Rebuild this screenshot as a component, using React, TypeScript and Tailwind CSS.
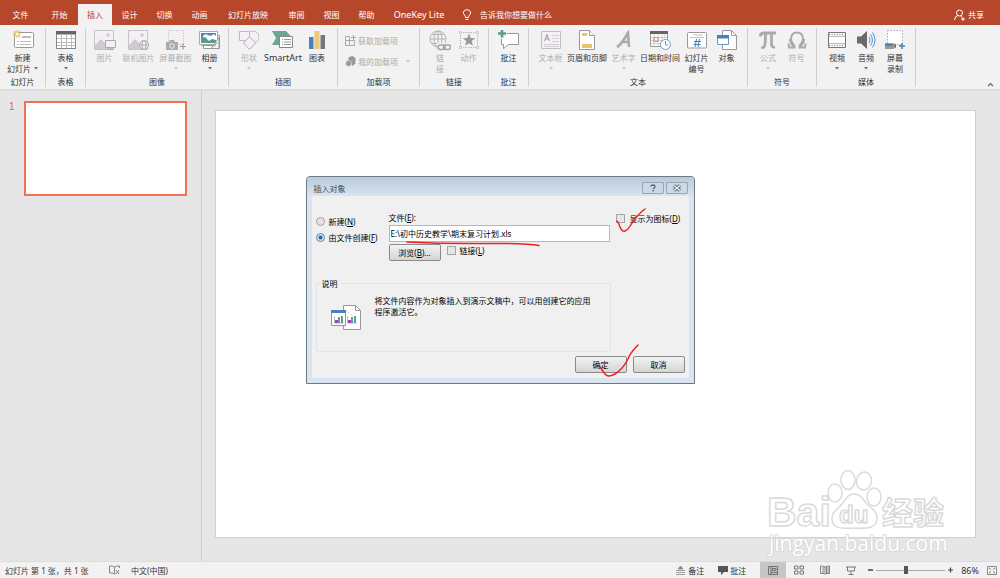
import React, { useState } from "react";
import clsx from "clsx";

const font =
	"font-['Noto_Sans','Noto_Sans_CJK_SC',sans-serif] text-[8px] leading-[11px]";

function Svg({
	w = 20,
	h = 20,
	children,
}: {
	w?: number;
	h?: number;
	children: React.ReactNode;
}) {
	return (
		<svg
			width={w}
			height={h}
			viewBox={`0 0 ${w} ${h}`}
			fill="none"
			className="shrink-0"
			aria-hidden="true"
		>
			{children}
		</svg>
	);
}

const icons = {
	newSlide: (
		<Svg w={22}>
			<rect x="2.500" y="2.500" width="19" height="15" rx="1" fill="#fff" stroke="#999" />
			<path d="M10 7h9" stroke="#bbb" strokeWidth="2" />
			<path d="M5 11.500h2M5 14.500h2M8 11.500h11M8 14.500h11" stroke="#bbb" />
			<path d="M5 0v8M1 4h8M2 1l6 6M8 1L2 7" stroke="#e8b860" strokeWidth="1.200" />
			<circle cx="5" cy="4" r="1.500" fill="#fff" />
		</Svg>
	),
	table: (
		<Svg>
			<rect x=".5" y="1.500" width="19" height="17" fill="#fff" stroke="#888" />
			<path d="M0 1h20v3.500H0z" fill="#666" />
			<path d="M5.500 4v14M10.500 4v14M15.500 4v14M1 8.500h18M1 12.500h18M1 15.500h18" stroke="#bbb" />
		</Svg>
	),
	picture: (
		<Svg w={22}>
			<path d="M.5.500h19v19H.5z" fill="#f6f0f6" stroke="#c4c4c4" />
			<path d="M1 15l6-6 5 5 3-3 4 4v4H1z" fill="#ccc" />
			<circle cx="14" cy="5" r="1.800" fill="#ccc" />
			<path d="M11.500 10.500h10v7h-10zM16.500 18v1.500M13 19.500h7" fill="#f6f0f6" stroke="#aaa" />
		</Svg>
	),
	onlinePicture: (
		<Svg w={22}>
			<path d="M.5.500h19v19H.5z" fill="#f6f0f6" stroke="#c4c4c4" />
			<path d="M1 15l6-6 6 6v4H1z" fill="#ccc" />
			<circle cx="14" cy="5" r="1.800" fill="#ccc" />
			<circle cx="16" cy="15" r="4.500" fill="#f6f0f6" stroke="#aaa" />
			<ellipse cx="16" cy="15" rx="2" ry="4.500" stroke="#aaa" />
			<path d="M11.500 15h9" stroke="#aaa" />
		</Svg>
	),
	screenshot: (
		<Svg w={20}>
			<path d="M2.500.500h15v14h-15z" fill="#f6f0f6" stroke="#bbb" strokeDasharray="1 1.500" />
			<path d="M0 12h3l1-2h4l1 2h3v8H0z" fill="#aaa" />
			<circle cx="6" cy="16" r="2.300" fill="#aaa" stroke="#eee" />
			<path d="M17 13.500v6M14 16.500h6" stroke="#999" strokeWidth="1.200" />
		</Svg>
	),
	album: (
		<Svg w={22}>
			<path d="M4.500 5.500h16v13h-16z" fill="#fff" stroke="#999" />
			<path d="M2.500 3.500h16v12h-16z" fill="#fff" stroke="#999" />
			<path d="M.5 1.500h18v13H.5z" fill="#fff" stroke="#aaa" />
			<path d="M2 3h15v6H2z" fill="#4a8ac0" />
			<path d="M4 6q2-3 5-1t6-1l2 2v3H4z" fill="#fff" />
			<path d="M2 8l4-1 4 4 3-2 4 1v3H2z" fill="#5c9c80" />
			<path d="M12 18.500l8-11v11z" fill="#f4f4f4" stroke="#999" />
			<path d="M15 16.500l3-4" stroke="#888" />
		</Svg>
	),
	shapes: (
		<Svg>
			<circle cx="14" cy="7" r="6" fill="#f6f0f6" stroke="#bbb" />
			<path d="M.5 1.500h10v9H.5z" fill="#f6f0f6" stroke="#bbb" />
			<path d="M10.500 6.500l6 6.500-6 6.500-6-6.500z" fill="#f6f0f6" stroke="#b0b0b0" />
		</Svg>
	),
	smartArt: (
		<Svg w={22}>
			<path d="M0 1h14l5 5.500H8V15H0l4-7z" fill="#6ba593" />
			<path d="M7.500 6.500h13v11h-13z" fill="#fff" stroke="#888" />
			<path d="M10 9.500h1M12 9.500h7M10 12h1M12 12h7M10 14.500h1M12 14.500h7" stroke="#999" />
		</Svg>
	),
	chart: (
		<Svg w={18}>
			<path d="M1 7h4.500v12H1z" fill="#4a80bd" />
			<path d="M6.500 1h5v18h-5z" fill="#edc77b" />
			<path d="M12.500 5H17v14h-4.500z" fill="#777" />
		</Svg>
	),
	hyperlink: (
		<Svg w={22} h={21}>
			<g stroke="#b4b4b4">
				<circle cx="9" cy="9" r="8" />
				<ellipse cx="9" cy="9" rx="4" ry="8" />
				<path d="M1 9h16M2.500 4.500h13M2.500 13.500h13M9 1v16" />
			</g>
			<path d="M8 13h14v8H8z" fill="#f2f2f2" />
			<rect x="9" y="15" width="7" height="4.500" rx="2.200" stroke="#a4a4a4" strokeWidth="1.500" />
			<rect x="14.500" y="15" width="7" height="4.500" rx="2.200" stroke="#a4a4a4" strokeWidth="1.500" />
		</Svg>
	),
	action: (
		<Svg>
			<path d="M1.500 2.500h17v15h-17z" stroke="#bbb" strokeDasharray="1.500 1" />
			<path d="M.5 1.500h2v2h-2zM17.500 1.500h2v2h-2zM.5 16.500h2v2h-2zM17.500 16.500h2v2h-2z" fill="#f2f2f2" stroke="#bbb" strokeWidth=".7" />
			<path d="M10 3.500l1.700 4.500 4.600.2-3.600 2.900 1.200 4.600L10 13.200l-3.900 2.500 1.200-4.600L3.700 8.200 8.300 8z" fill="#999" />
		</Svg>
	),
	comment: (
		<Svg w={22}>
			<path d="M3.500 3.500h17v11h-10l-5 4v-4h-2z" fill="#fff" stroke="#999" />
			<path d="M4 0v9M0 3.500h9" stroke="#f2f2f2" strokeWidth="5" />
			<path d="M4 0v7.500M0 3.500h8" stroke="#5f9f87" strokeWidth="2.600" />
		</Svg>
	),
	textBox: (
		<Svg>
			<path d="M.5 1.500h19v17H.5z" fill="#f6f0f6" stroke="#c0c0c0" />
			<path d="M3.500 11L6 4.500 8.500 11M4.500 9h3" stroke="#999" />
			<path d="M11 5.500h7M11 8.500h7M11 11.500h7M3 14.500h15M3 16.500h15" stroke="#d0d0d0" />
		</Svg>
	),
	header: (
		<Svg w={16}>
			<path d="M.5.500h10l5 5v14H.5z" fill="#fff" stroke="#999" />
			<path d="M10.500.500v5h5" fill="#fff" stroke="#999" />
			<path d="M3 3h5v3H3zM3 14h10v4H3z" fill="#e9c46f" />
		</Svg>
	),
	wordArt: (
		<Svg w={16}>
			<path d="M1 17Q5 15 12 3l1 14M6 12h7" stroke="#aaa" strokeWidth="2.600" />
		</Svg>
	),
	dateTime: (
		<Svg w={22}>
			<path d="M1.500 1.500h17v15h-17z" fill="#fff" stroke="#999" />
			<path d="M1 1h18v3H1z" fill="#666" />
			<path d="M5 4v12M9 4v12M13 4v12M16 4v12M2 7.500h16M2 10.500h16M2 13.500h16" stroke="#c4c4c4" strokeWidth=".8" />
			<path d="M5 7.500h4v4H5z" stroke="#e8935a" strokeWidth="1.200" />
			<circle cx="16.500" cy="14.500" r="5" fill="#fff" stroke="#6b9fd0" />
			<path d="M16.500 11v4h3" stroke="#6b9fd0" />
		</Svg>
	),
	slideNumber: (
		<Svg>
			<rect x=".5" y="2.500" width="19" height="15.500" rx="1" fill="#fff" stroke="#999" />
			<path d="M6 5h10M3 7.500h14" stroke="#c4c4c4" />
			<path d="M9.500 9l-1.500 8M12.500 9L11 17M7 11.500h7M6.500 14.500h7" stroke="#4a80bd" />
		</Svg>
	),
	object: (
		<Svg>
			<path d="M5.500.500h9l5 5v14h-14z" fill="#fff" stroke="#999" />
			<path d="M14.500.500v5h5" stroke="#999" />
			<path d="M.5 5.500h11v9H.5z" fill="#fff" stroke="#6a98cc" />
			<path d="M0 5h12v3.500H0z" fill="#4a80bd" />
		</Svg>
	),
	equation: (
		<Svg w={18}>
			<path d="M1 6.500Q1.500 3 5 3h12" stroke="#aaa" strokeWidth="3" />
			<path d="M6.500 4q0 10-1 12-1 2.500-3 1M12.500 4v10q0 4 3.500 3" stroke="#aaa" strokeWidth="2.800" />
		</Svg>
	),
	symbol: (
		<Svg>
			<path d="M6.500 16.500Q3 13 3 9" stroke="#aaa" strokeWidth="2" />
			<path d="M13.500 16.500Q17 13 17 9" stroke="#aaa" strokeWidth="2" />
			<path d="M1.500 13.500l.5 4h5.500q0-2.500-2-4.500Q4 11.500 4 8.500 4.500 2.500 10 2.500t6 6q0 3-1.500 4.500-2 2-2 4.500H18l.5-4" stroke="#aaa" strokeWidth="2" />
		</Svg>
	),
	video: (
		<Svg>
			<path d="M1.500 2.500h17v15h-17z" fill="#fff" stroke="#777" />
			<path d="M2 4.500h16M2 15.500h16" stroke="#888" strokeWidth="1.600" strokeDasharray="1 1.600" />
			<path d="M2 6.500h16M2 13.500h16" stroke="#aaa" strokeWidth=".8" />
		</Svg>
	),
	audio: (
		<Svg>
			<path d="M1 6.500h4L11 1v18l-6-5.500H1z" fill="#6a6a6a" />
			<path d="M13 7q2 3 0 6M14.500 4.500q4 5.500 0 11M16.500 2.500q5 7.500 0 15" stroke="#6b9fd0" strokeWidth="1.100" />
		</Svg>
	),
	record: (
		<Svg w={22}>
			<path d="M3.500.500h15v14h-15z" fill="#fff" stroke="#aaa" strokeDasharray="1.500 1.500" />
			<path d="M1 13h9v6H1z" fill="#999" />
			<path d="M1 14h7v2H1z" fill="#4a80bd" />
			<path d="M10 15l2-1.500v5L10 17z" fill="#777" />
			<path d="M18 13v6M15 16h6" stroke="#4a80bd" strokeWidth="1.500" />
		</Svg>
	),
};

type Item = {
	label: string;
	icon: React.ReactNode;
	width: string;
	arrow?: boolean;
	disabled?: boolean;
	labelWidth?: string;
};

const w28 = "w-7";
const w29 = "w-[29px]";
const w31 = "w-[31px]";
const w37 = "w-[37px]";
const w42 = "w-[42px]";

const groups: { name: string; width: string; items: Item[] }[] = [
	{
		name: "幻灯片",
		width: "w-[46px]",
		items: [{ label: "新建幻灯片", icon: icons.newSlide, width: w37 }],
	},
	{
		name: "表格",
		width: "w-10",
		items: [{ label: "表格", icon: icons.table, width: w31, arrow: true }],
	},
	{
		name: "图像",
		width: "w-[143px]",
		items: [
			{ label: "图片", icon: icons.picture, width: w31, disabled: true },
			{ label: "联机图片", icon: icons.onlinePicture, width: w37, disabled: true },
			{ label: "屏幕截图", icon: icons.screenshot, width: w37, disabled: true, arrow: true },
			{ label: "相册", icon: icons.album, width: w31, arrow: true },
		],
	},
	{
		name: "插图",
		width: "w-[109px]",
		items: [
			{ label: "形状", icon: icons.shapes, width: w31, disabled: true, arrow: true },
			{ label: "SmartArt", icon: icons.smartArt, width: w37 },
			{ label: "图表", icon: icons.chart, width: w31 },
		],
	},
	{ name: "加载项", width: "w-[82px]", items: [] },
	{
		name: "链接",
		width: "w-[69px]",
		items: [
			{ label: "链接", icon: icons.hyperlink, width: w29, disabled: true, labelWidth: "w-2" },
			{ label: "动作", icon: icons.action, width: w28, disabled: true },
		],
	},
	{
		name: "批注",
		width: "w-10",
		items: [{ label: "批注", icon: icons.comment, width: w31 }],
	},
	{
		name: "文本",
		width: "w-[219px]",
		items: [
			{ label: "文本框", icon: icons.textBox, width: w31, disabled: true, arrow: true },
			{ label: "页眉和页脚", icon: icons.header, width: w42 },
			{ label: "艺术字", icon: icons.wordArt, width: w31, disabled: true, arrow: true },
			{ label: "日期和时间", icon: icons.dateTime, width: w42 },
			{ label: "幻灯片编号", icon: icons.slideNumber, width: w31, labelWidth: "w-6" },
			{ label: "对象", icon: icons.object, width: w29 },
		],
	},
	{
		name: "符号",
		width: "w-[69px]",
		items: [
			{ label: "公式", icon: icons.equation, width: w29, disabled: true, arrow: true },
			{ label: "符号", icon: icons.symbol, width: w28, disabled: true },
		],
	},
	{
		name: "媒体",
		width: "w-[99px]",
		items: [
			{ label: "视频", icon: icons.video, width: w29, arrow: true },
			{ label: "音频", icon: icons.audio, width: w29, arrow: true },
			{ label: "屏幕录制", icon: icons.record, width: w29, labelWidth: "w-4" },
		],
	},
];

const tabs = [
	{ label: "文件", width: "w-[41px]" },
	{ label: "开始", width: "w-[37px]" },
	{ label: "插入", width: "w-[34px]" },
	{ label: "设计", width: "w-[35px]" },
	{ label: "切换", width: "w-[35px]" },
	{ label: "动画", width: "w-[35px]" },
	{ label: "幻灯片放映", width: "w-[62px]" },
	{ label: "审阅", width: "w-[35px]" },
	{ label: "视图", width: "w-[35px]" },
	{ label: "帮助", width: "w-[35px]" },
	{ label: "OneKey Lite", width: "w-[70px]" },
];

function Arrow() {
	return (
		<Svg w={4} h={3}>
			<path d="M0 0h4L2 2.500z" fill="currentColor" opacity=".7" />
		</Svg>
	);
}

function RibbonButton({ item }: { item: Item }) {
	return (
		<button
			disabled={item.disabled}
			className={clsx(
				"flex shrink-0 flex-col items-center gap-[2px] text-[#333] disabled:text-[#b0b0b0]",
				item.width,
			)}
		>
			<span className="flex h-5 items-center">{item.icon}</span>
			{item.label === "新建幻灯片" ? (
				<span>
					新建
					<span className="flex items-center gap-[3px]">
						幻灯片 <Arrow />
					</span>
				</span>
			) : (
				<span
					className={clsx(
						item.labelWidth ?? "whitespace-nowrap",
						item.label === "SmartArt" && "text-[9px]",
					)}
				>
					{item.label}
				</span>
			)}
			{item.arrow && (
				<span className="pt-[2px]">
					<Arrow />
				</span>
			)}
		</button>
	);
}

function AddIns() {
	return (
		<div className="flex flex-1 flex-col gap-[10px] self-start pt-[5px] pl-[7px] text-[#aaa]">
			<button disabled className="flex items-center gap-[2px]">
				<Svg w={11} h={11}>
					<path d="M.5 1.500h4v4h-4zM.5 5.500h4v5h-4zM4.500 5.500h5v5h-5zM8.500 0v5M6 2.500h5" stroke="#aaa" />
				</Svg>
				获取加载项
			</button>
			<button disabled className="flex items-center gap-[2px]">
				<Svg w={11} h={11}>
					<path d="M4 1l3.500-1L10.500 2v5.500L7.500 10 6 7 3 4z" fill="#999" />
					<circle cx="3.500" cy="7.500" r="3" fill="#999" stroke="#f2f2f2" strokeWidth=".6" />
				</Svg>
				我的加载项
				<span className="pl-[6px]">
					<Arrow />
				</span>
			</button>
		</div>
	);
}

function Header() {
	const [active, setActive] = useState("插入");

	return (
		<header>
			<div className="flex h-[25px] items-end bg-[#b7472a] text-white">
				<nav className="flex">
					{tabs.map((tab) => (
						<button
							key={tab.label}
							onClick={() => setActive(tab.label)}
							className={clsx(
								"h-[21px] whitespace-nowrap",
								tab.width,
								tab.label === "OneKey Lite" && "text-[9px]",
								active === tab.label && "bg-[#f2f2f2] text-[#b7472a]",
							)}
						>
							{tab.label}
						</button>
					))}
				</nav>
				<button className="flex h-[21px] items-center gap-2 pl-2">
					<Svg w={10} h={12}>
						<path d="M3.500 8.500Q3.500 7 2.500 6 1 4.500 1.500 3 2.200.700 5 .700T8.500 3q.5 1.500-1 3-1 1-1 2.500zM3.500 10.500h3" stroke="#fff" />
					</Svg>
					告诉我你想要做什么
				</button>
				<button className="mr-4 ml-auto flex h-[21px] items-center gap-[3px]">
					<Svg w={11} h={12}>
						<circle cx="5.500" cy="4" r="3" stroke="#fff" />
						<path d="M.5 11q.3-4 3.500-4.500M6.500 7L8 8M9 8v4M7 10h4" stroke="#fff" />
					</Svg>
					共享
				</button>
			</div>
			<div className="flex h-[66px] border-b-2 border-[#dbdbdb] bg-[#f2f2f2] pt-[3px]">
				{groups.map((group) => (
					<section
						key={group.name}
						className={clsx(
							"mb-[2px] flex shrink-0 flex-col border-r border-[#cfcfcf] pt-[2px]",
							group.width,
						)}
					>
						<div className="flex h-12 justify-center">
							{group.name === "加载项" ? (
								<AddIns />
							) : (
								group.items.map((item) => (
									<RibbonButton key={item.label} item={item} />
								))
							)}
						</div>
						<h2 className="text-center text-[#333]">{group.name}</h2>
					</section>
				))}
				<button aria-label="折叠功能区" className="mr-[6px] mb-[2px] ml-auto self-end">
					<Svg w={7} h={5}>
						<path d="M1 4l2.500-2.500L6 4" stroke="#666" strokeWidth="1.200" />
					</Svg>
				</button>
			</div>
		</header>
	);
}

const dialogButton =
	"h-[17px] w-[52px] rounded-[2px] border border-[#8a8a8a] bg-linear-to-b from-[#f3f3f3] to-[#d4d4d4] text-center leading-[14px] text-black";
const checkbox =
	"size-[9px] appearance-none border border-[#a4a4a4] bg-[#e4e6e8] checked:bg-[#4a80bd]";
const radio =
	"size-[9px] appearance-none rounded-full border border-[#a4a4a4] bg-[#e4e4e4] checked:border-[#6d8398] checked:bg-[radial-gradient(circle,#1f6fa8_30%,#dbe7ef_50%)]";
const captionButton =
	"flex h-3 w-[22px] items-center justify-center rounded-[1px] border border-[#97a5b5] bg-[#ccd8e5]";

function InsertObjectDialog() {
	const [source, setSource] = useState("file");

	return (
		<div
			role="dialog"
			aria-label="插入对象"
			className="absolute inset-x-0 top-[176px] mx-auto w-[389px] rounded-t-[4px] border border-[#6d7882] bg-[#d9e5f1] px-[5px] pb-[5px] text-black"
		>
			<div className="-mx-[5px] flex h-[19px] items-center gap-[2px] rounded-t-[4px] bg-linear-to-b from-[#b9c9da] to-[#d9e5f1] pt-[3px] pr-[6px] pl-[7px]">
				<h1 className="mr-auto text-[#3f4b58]">插入对象</h1>
				<button aria-label="帮助" className={captionButton}>
					<Svg w={6} h={8}>
						<path d="M1 2.500Q1 1 3 1t2 1.500T3 5M3 6v1.500" stroke="#566472" strokeWidth="1.300" />
					</Svg>
				</button>
				<button aria-label="关闭" className={captionButton}>
					<Svg w={10} h={8}>
						<path d="M2 1.500l6 5M8 1.500l-6 5" stroke="#566472" strokeWidth="3.200" />
						<path d="M2 1.500l6 5M8 1.500l-6 5" stroke="#eef2f6" strokeWidth="1.400" />
					</Svg>
				</button>
			</div>
			<div className="bg-[#f0f0f0] pt-4 pr-1 pb-[5px] pl-1">
				<div className="flex">
					<div className="flex w-[73px] flex-col gap-[5px] pt-1">
						<label className="flex items-center gap-1 whitespace-nowrap">
							<input
								type="radio"
								name="source"
								className={radio}
								checked={source === "new"}
								onChange={() => setSource("new")}
							/>
							<span>
								新建(<u>N</u>)
							</span>
						</label>
						<label className="flex items-center gap-1 whitespace-nowrap">
							<input
								type="radio"
								name="source"
								className={radio}
								checked={source === "file"}
								onChange={() => setSource("file")}
							/>
							<span>
								由文件创建(<u>F</u>)
							</span>
						</label>
					</div>
					<div className="flex w-[221px] flex-col">
						<label htmlFor="path">
							文件(<u>E</u>):
						</label>
						<input
							id="path"
							defaultValue="E:\初中历史教学\期末复习计划.xls"
							className="mt-[2px] h-[17px] border border-[#b4b8bc] bg-white px-px"
						/>
						<div className="mt-[2px] flex gap-[6px]">
							<button className={dialogButton}>
								浏览(<u>B</u>)...
							</button>
							<label className="flex h-3 items-center gap-1">
								<input type="checkbox" className={checkbox} />
								<span>
									链接(<u>L</u>)
								</span>
							</label>
						</div>
					</div>
					<label className="ml-[6px] flex h-3 items-center gap-[5px] whitespace-nowrap">
						<input type="checkbox" className={checkbox} />
						<span>
							显示为图标(<u>D</u>)
						</span>
					</label>
				</div>
				<fieldset className="mt-[17px] h-[74px] w-[295px] rounded-[2px] border border-[#dde4e8] px-[14px]">
					<legend className="-ml-[11px] px-[2px]">说明</legend>
					<div className="flex gap-[14px] pt-[6px]">
						<div className="pt-[10px]">
							<Svg w={30} h={25}>
								<path d="M12.500.500h12l5 5v19h-17z" fill="#fff" stroke="#999" />
								<path d="M24.500.500v5h5" stroke="#999" />
								<path d="M14 5l8 6" stroke="#bbb" strokeDasharray="1 1" />
								<path d="M.5 5.500h14v15H.5z" fill="#fff" stroke="#8898a8" />
								<path d="M0 5h15v3H0z" fill="#4a80bd" />
								<path d="M3.500 11v7h9M16.500 11v7h9" stroke="#999" strokeWidth=".7" />
								<path d="M4 15h3v3H4zM17 15h3v3h-3z" fill="#9a4aa8" />
								<path d="M7 12h2v6H7zM20 12h2v6h-2z" fill="#6a90c8" />
								<path d="M10 11h2v7h-2zM23 11h2v7h-2z" fill="#5aa088" />
							</Svg>
						</div>
						<p className="flex-1">
							将文件内容作为对象插入到演示文稿中，可以用创建它的应用
							<br />
							程序激活它。
						</p>
					</div>
				</fieldset>
				<div className="mt-1 flex justify-end gap-[6px]">
					<button className={dialogButton}>确定</button>
					<button className={dialogButton}>取消</button>
				</div>
			</div>
			<svg
				viewBox="0 0 389 208"
				className="pointer-events-none absolute -top-px -left-px h-[208px] w-[389px]"
				fill="none"
				stroke="#f02020"
				strokeWidth="1.500"
				strokeLinecap="round"
				strokeLinejoin="round"
				aria-hidden="true"
			>
				<path d="M101 66Q140 68 180 67.500T233 69.500" />
				<path d="M311 45q2 2 3 6 2 5 5 4 3-1 7-8 6-9 13-14" />
				<path d="M294 191q2 3 5 7 3 4 10 0 8-5 13-15 2-6 10-14" />
			</svg>
		</div>
	);
}

function Watermark() {
	return (
		<svg
			width="190"
			height="92"
			viewBox="0 0 190 92"
			className="pointer-events-none absolute right-12 bottom-[2px]"
			fill="#fff"
			stroke="#dadada"
			strokeLinejoin="round"
			aria-hidden="true"
		>
			<g strokeWidth="1.500">
				<ellipse cx="73" cy="26" rx="7" ry="9" />
				<ellipse cx="86" cy="13" rx="7" ry="9.500" />
				<ellipse cx="102" cy="14" rx="7.500" ry="9" transform="rotate(10 102 14)" />
				<ellipse cx="112" cy="30" rx="7" ry="9" />
				<path d="M92 27c7 0 9 6 13 10s11 8 10 15c-1 9-9 10-23 9-14 1-21 0-22-8-1-8 6-11 10-16s6-10 12-10z" />
			</g>
			<g strokeWidth="1.500" className="font-['Liberation_Sans',sans-serif] font-bold">
				<text x="5" y="59" fontSize="41">
					Bai
				</text>
				<text x="77" y="56" fontSize="24">
					du
				</text>
			</g>
			<text
				x="120"
				y="57"
				fontSize="31"
				strokeWidth="1.500"
				className="font-['Noto_Sans_CJK_SC',sans-serif] font-bold"
			>
				经验
			</text>
			<text
				x="7"
				y="84"
				fontSize="21"
				strokeWidth="2"
				paintOrder="stroke"
				className="font-['Open_Sans',sans-serif]"
			>
				jingyan.baidu.com
			</text>
		</svg>
	);
}

function StatusBar() {
	const [zoom, setZoom] = useState(43);

	return (
		<footer className="flex h-[17px] items-center border-t border-[#dcdcdc] bg-[#f2f2f2] pr-[3px] pl-[5px] text-[#333]">
			<span className="w-[104px]">幻灯片 第 1 张，共 1 张</span>
			<button aria-label="拼写检查" className="mr-[11px]">
				<Svg w={11} h={10}>
					<path d="M5.500 2Q3 .5.500 1v7q2.500-.5 5 1zM5.500 2Q8 .5 10.500 1v2M5.500 9l1-.5M7 5l3 4M10 5L7 9" stroke="#888" />
				</Svg>
			</button>
			<button>中文(中国)</button>
			<button className="mr-[14px] ml-auto flex items-center gap-[3px]">
				<Svg w={9} h={9}>
					<path d="M4.500 0L7 3H2zM0 4.500h9M0 6.500h9M0 8.500h9" fill="#888" stroke="#888" strokeWidth=".8" />
				</Svg>
				备注
			</button>
			<button className="mr-[14px] flex items-center gap-[2px]">
				<Svg w={10} h={9}>
					<path d="M0 0h10v6H6L3 9V6H0z" fill="#555" />
				</Svg>
				批注
			</button>
			<div className="flex h-full">
				<button aria-label="普通视图" className="flex w-[26px] items-center justify-center bg-[#c6c6c6]">
					<Svg w={10} h={9}>
						<path d="M.5.500h9v8h-9zM3 .500v8M4.500 2.500h3.500v2H4.500zM3 6.500h6" stroke="#666" strokeWidth=".9" />
					</Svg>
				</button>
				<button aria-label="幻灯片浏览" className="flex w-[26px] items-center justify-center">
					<Svg w={10} h={10}>
						<path d="M.5 1h3.500v3H.5zM6 1h3.500v3H6zM.5 6h3.500v3H.5zM6 6h3.500v3H6z" stroke="#777" />
					</Svg>
				</button>
				<button aria-label="阅读视图" className="flex w-[26px] items-center justify-center">
					<Svg w={10} h={10}>
						<path d="M5 2Q3 .8.500 1v7.500H4L5 9.500l1-1h3.500V1Q7 .8 5 2zv7M2 3h2M2 5h2M2 7h2M6.500 2v6M8 2v6" stroke="#777" strokeWidth=".9" />
					</Svg>
				</button>
				<button aria-label="幻灯片放映" className="flex w-[26px] items-center justify-center">
					<Svg w={10} h={9}>
						<path d="M0 1h10M1.500 1v4h7V1M5 5v3M2.500 8.500h5" stroke="#777" />
					</Svg>
				</button>
			</div>
			<button aria-label="缩小" className="ml-1">
				<Svg w={5} h={6}>
					<path d="M0 3h5" stroke="#444" strokeWidth="1.500" />
				</Svg>
			</button>
			<input
				type="range"
				aria-label="缩放"
				value={zoom}
				onChange={(e) => setZoom(Number(e.target.value))}
				className="mx-[3px] h-2 w-[69px] appearance-none bg-transparent [&::-webkit-slider-runnable-track]:h-px [&::-webkit-slider-runnable-track]:bg-[#aaa] [&::-webkit-slider-thumb]:-mt-[4px] [&::-webkit-slider-thumb]:h-2 [&::-webkit-slider-thumb]:w-1 [&::-webkit-slider-thumb]:appearance-none [&::-webkit-slider-thumb]:bg-[#555]"
			/>
			<button aria-label="放大">
				<Svg w={5} h={6}>
					<path d="M0 3h5M2.500.500v5" stroke="#444" strokeWidth="1.200" />
				</Svg>
			</button>
			<button className="mr-2 ml-2 text-[9px]">86%</button>
			<button aria-label="适应窗口">
				<Svg w={10} h={9}>
					<path d="M.5.500h9v8h-9z" stroke="#888" />
					<path d="M2 2l2 1.500M8 2L6 3.500M2 7l2-1.500M8 7L6 5.500" stroke="#777" />
				</Svg>
			</button>
		</footer>
	);
}

export default function App() {
	return (
		<div className={clsx("relative flex min-h-screen flex-col bg-[#e6e6e6]", font)}>
			<Header />
			<main className="relative flex flex-1">
				<aside className="flex w-[202px] shrink-0 items-start border-r border-[#cdcdcd] pt-[10px] pl-[9px]">
					<span className="w-[15px] font-['Liberation_Sans',sans-serif] text-[10px] text-[#e8643f]">
						1
					</span>
					<button
						aria-label="幻灯片 1"
						className="h-[95px] w-[163px] border-2 border-[#f07252] bg-white"
					/>
				</aside>
				<div className="flex-1 pt-[19px] pr-6 pb-5 pl-[13px]">
					<div className="aspect-video border border-[#d0d0d0] bg-white" />
				</div>
				<Watermark />
			</main>
			<StatusBar />
			<InsertObjectDialog />
		</div>
	);
}
